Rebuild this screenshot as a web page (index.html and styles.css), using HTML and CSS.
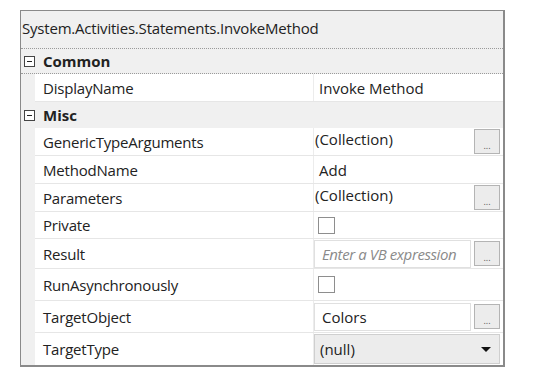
FILE: index.html
```html
<!DOCTYPE html>
<html>
<head>
    <title>Properties</title>
    <link rel="stylesheet" href="styles.css">
</head>
<body>
    <div class="grid">
        <div class="title">System.Activities.Statements.InvokeMethod</div>

        <div class="category first"><span class="toggle"></span>Common</div>
        <div class="row r28">
            <div class="name">DisplayName</div>
            <div class="value"><span class="plain">Invoke Method</span></div>
        </div>

        <div class="category"><span class="toggle"></span>Misc</div>
        <div class="row r28">
            <div class="name">GenericTypeArguments</div>
            <div class="value"><span class="plain up">(Collection)</span><span class="dots">...</span></div>
        </div>
        <div class="row r28">
            <div class="name">MethodName</div>
            <div class="value"><span class="plain">Add</span></div>
        </div>
        <div class="row r28">
            <div class="name">Parameters</div>
            <div class="value"><span class="plain up">(Collection)</span><span class="dots">...</span></div>
        </div>
        <div class="row r27">
            <div class="name">Private</div>
            <div class="value"><span class="check"></span></div>
        </div>
        <div class="row r30">
            <div class="name">Result</div>
            <div class="value"><span class="box hint">Enter a VB expression</span><span class="dots">...</span></div>
        </div>
        <div class="row r32">
            <div class="name">RunAsynchronously</div>
            <div class="value"><span class="check"></span></div>
        </div>
        <div class="row r32">
            <div class="name">TargetObject</div>
            <div class="value"><span class="box">Colors</span><span class="dots">...</span></div>
        </div>
        <div class="row r32 last">
            <div class="name">TargetType</div>
            <div class="value"><span class="combo">(null)<span class="arrow"></span></span></div>
        </div>
    </div>
</body>
</html>
```

FILE: styles.css
```css
* {
    box-sizing: border-box;
}
body {
    margin: 0;
    padding: 10px 0 0 20px;
    background: #ffffff;
    font-family: "Open Sans", "Noto Sans", sans-serif;
    font-size: 15px;
    color: #222;
}
.grid {
    width: 485px;
    border: 2px solid #8a8a8a;
    border-top-width: 1px;
    border-left-width: 1px;
    background: #f0f0f0;
}
.title {
    height: 38px;
    line-height: 35px;
    padding-left: 1px;
    letter-spacing: -0.2px;
    border-bottom: 1px dotted #9a9a9a;
}
.category {
    display: flex;
    align-items: center;
    height: 26px;
    font-weight: bold;
    font-size: 15px;
}
.category.first {
    height: 25px;
    border-bottom: 1px dotted #9a9a9a;
}
.toggle {
    width: 11px;
    height: 11px;
    border: 1px solid #444;
    margin: 0 8px 0 3px;
    position: relative;
    background: #fff;
}
.toggle::after {
    content: "";
    position: absolute;
    left: 2px;
    top: 4px;
    width: 5px;
    height: 1px;
    background: #222;
}
.row {
    display: flex;
    margin-left: 14px;
    background: #fff;
    border-bottom: 1px solid #e6e6e6;
}
.row.last {
    border-bottom: none;
}
.r27 { height: 27px; }
.r28 { height: 28px; }
.r30 { height: 30px; }
.r32 { height: 32px; }
.name {
    width: 279px;
    padding-left: 8px;
    display: flex;
    align-items: center;
    border-right: 1px solid #ececec;
    letter-spacing: -0.2px;
}
.value {
    flex: 1;
    display: flex;
    align-items: center;
    gap: 3px;
    padding-right: 3px;
}
.plain {
    flex: 1;
    padding-left: 5px;
}
.plain.up {
    padding-left: 1px;
    margin-top: -5px;
}
.dots {
    width: 26px;
    height: 25px;
    border: 1px solid #b4b4b4;
    background: #ececec;
    font-size: 9px;
    color: #555;
    display: flex;
    align-items: flex-end;
    justify-content: center;
    line-height: 15px;
}
.check {
    width: 17px;
    height: 17px;
    border: 1px solid #8e8e8e;
    margin-left: 4px;
    background: #fff;
}
.box {
    flex: 1;
    height: 28px;
    border: 1px solid #e0e0e0;
    display: flex;
    align-items: center;
    padding-left: 7px;
}
.hint {
    color: #8a8a8a;
    font-style: italic;
    white-space: nowrap;
    overflow: hidden;
    letter-spacing: -0.4px;
}
.combo {
    flex: 1;
    height: 30px;
    border: 1px solid #cfcfcf;
    background: #ececec;
    display: flex;
    align-items: center;
    justify-content: space-between;
    padding: 0 8px 0 5px;
}
.arrow {
    width: 0;
    height: 0;
    border-left: 5px solid transparent;
    border-right: 5px solid transparent;
    border-top: 5px solid #111;
}
```
